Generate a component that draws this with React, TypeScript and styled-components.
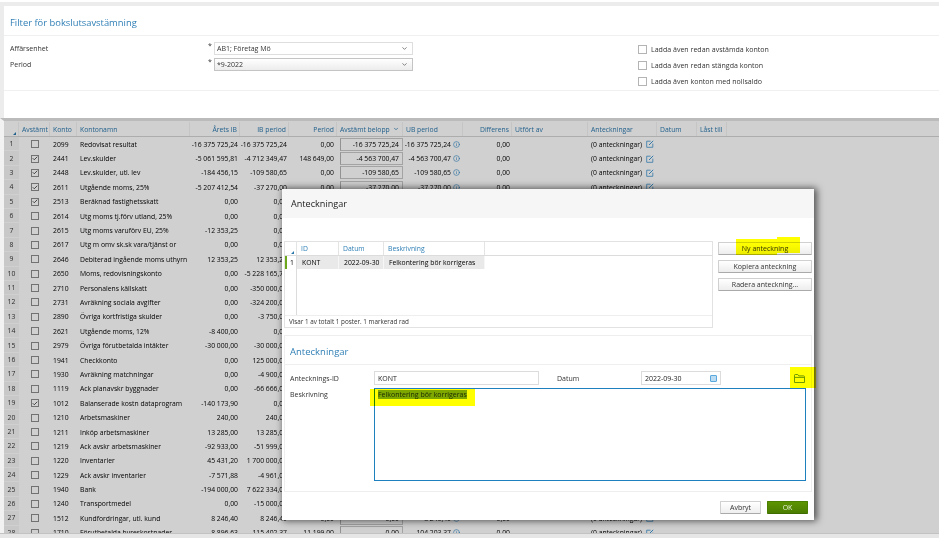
import React from 'react';
import styled, { createGlobalStyle } from 'styled-components';
import { Info, Check, ChevronDown } from 'lucide-react';

const GlobalStyle = createGlobalStyle`
  html, body {
    margin: 0;
    padding: 0;
    background: #fff;
    overflow: hidden;
  }
  body {
    font-family: 'Open Sans', 'Liberation Sans', sans-serif;
    font-size: 7px;
    color: #222;
  }
`;

const COLUMNS = '15px 31px 27px 113px 50px 49px 48px 66px 60px 49px 76px 69px 40px 30px 1fr';
const ROW_HEIGHT = 14.4;

const Page = styled.div`
  position: relative;
  width: 939px;
  height: 538px;
  overflow: hidden;
  display: flex;
  flex-direction: column;
  background: #fff;
  filter: blur(0.3px);
`;

const TopStrip = styled.div`
  height: 6px;
  flex: none;
  border-top: 2px solid #fff;
  box-sizing: border-box;
  background: #ececec;
`;

const FilterPanel = styled.section`
  height: 112px;
  flex: none;
  box-sizing: border-box;
  border-left: 4px solid #ececec;
  background: #fff;
`;

const FilterTitle = styled.h2`
  margin: 0;
  height: 30px;
  box-sizing: border-box;
  padding: 10px 0 0 6px;
  border-bottom: 1px solid #f0f0f0;
  font-size: 9.4px;
  line-height: 14px;
  font-weight: 400;
  color: #2f7fb5;
`;

const FilterBody = styled.div`
  height: 55px;
  box-sizing: border-box;
  padding: 6px 0 0 6px;
  border-bottom: 1px solid #f0f0f0;
  display: grid;
  grid-template-columns: 198px 6px 199px 225px 1fr;
  grid-auto-rows: 13px;
  row-gap: 3px;
  align-items: center;
`;

const FieldLabel = styled.span`
  font-size: 7px;
  color: #333;
`;

const Required = styled.span`
  align-self: start;
  font-size: 7px;
  line-height: 8px;
  color: #333;
`;

const SelectBox = styled.div<{ $raised?: boolean }>`
  height: 13px;
  box-sizing: border-box;
  padding: 0 4px 0 2px;
  display: flex;
  align-items: center;
  justify-content: space-between;
  font-size: 7px;
  color: #333;
  border: 1px solid ${(p) => (p.$raised ? '#c4c4c4' : '#dedede')};
  background: ${(p) => (p.$raised ? 'linear-gradient(#fff, #ececec)' : '#fff')};
`;

const CheckOption = styled.label`
  display: flex;
  align-items: center;
  gap: 4px;
  font-size: 7.05px;
  color: #333;
`;

const OptionList = styled.div`
  grid-column: 5;
  grid-row: 1 / span 3;
  align-self: start;
  margin-top: 2px;
  display: flex;
  flex-direction: column;
  gap: 6px;
`;

const OptionBox = styled.span`
  width: 9px;
  height: 9px;
  flex: none;
  box-sizing: border-box;
  border: 1px solid #b4b4b4;
  background: #fff;
`;

const GridArea = styled.div`
  position: relative;
  height: 415px;
  flex: none;
  box-sizing: border-box;
  border-top: 3px solid #bbb;
  border-left: 4px solid #f2f2f2;
  overflow: hidden;
  background: #fff;
`;

const Dim = styled.div`
  position: absolute;
  inset: 0;
  background: rgba(0, 0, 0, 0.185);
`;

const BottomStrip = styled.div`
  flex: 1;
  box-sizing: border-box;
  border-top: 1px solid #c2c2c2;
  background: #e6e6e6;
`;

const HeaderRow = styled.div`
  display: grid;
  grid-template-columns: ${COLUMNS};
  height: 15px;
  margin-top: 1px;
  box-sizing: border-box;
  border-bottom: 1px solid #d4d4d4;
  background: #fff;
`;

const HeaderCell = styled.div<{ $right?: boolean }>`
  position: relative;
  display: flex;
  align-items: center;
  justify-content: ${(p) => (p.$right ? 'flex-end' : 'flex-start')};
  gap: 3px;
  padding: 0 2px 0 3px;
  border-right: 1px solid #f2f2f2;
  font-size: 6.8px;
  color: #2c78ad;
  white-space: nowrap;
  overflow: hidden;
`;

const SortCorner = styled.span`
  position: absolute;
  right: 2px;
  bottom: 1px;
  width: 0;
  height: 0;
  border-left: 3px solid transparent;
  border-bottom: 3px solid #2c78ad;
`;

const DataRow = styled.div`
  display: grid;
  grid-template-columns: ${COLUMNS};
  height: ${ROW_HEIGHT}px;
  box-sizing: border-box;
`;

const RowNumber = styled.div`
  display: flex;
  align-items: center;
  justify-content: center;
  border-bottom: 1px solid #fff;
  background: #f6f6f6;
  font-size: 6.8px;
  color: #333;
`;

const Cell = styled.div<{ $right?: boolean; $pad?: number }>`
  display: flex;
  align-items: center;
  justify-content: ${(p) => (p.$right ? 'flex-end' : 'flex-start')};
  padding: ${(p) => (p.$right ? `0 ${p.$pad ?? 2}px 0 0` : `0 0 0 ${p.$pad ?? 3}px`)};
  font-size: 6.8px;
  color: #000;
  white-space: nowrap;
  overflow: hidden;
`;

const CheckCell = styled(Cell)`
  justify-content: center;
  padding: 0;
`;

const RowCheck = styled.span`
  width: 8px;
  height: 8px;
  box-sizing: border-box;
  display: flex;
  align-items: center;
  justify-content: center;
  border: 1px solid #8c8c8c;
  background: #fff;
`;

const AmountBox = styled.div`
  flex: 1;
  height: 13px;
  box-sizing: border-box;
  padding-right: 3px;
  display: flex;
  align-items: center;
  justify-content: flex-end;
  border: 1px solid #c8c8c8;
  border-left-color: #b4b4b4;
  background: #fff;
  font-size: 6.8px;
  color: #000;
`;

const UbValue = styled.span`
  display: inline-flex;
  align-items: center;
  gap: 2px;
`;

const NoteLink = styled.span`
  display: inline-flex;
  align-items: center;
  gap: 4px;
`;

const Modal = styled.div`
  position: absolute;
  left: 282px;
  top: 189px;
  width: 532px;
  height: 331px;
  display: flex;
  flex-direction: column;
  background: #fff;
  box-shadow: 2px 0 7px 1px rgba(0, 0, 0, 0.6);
`;

const ModalHeader = styled.div`
  height: 29px;
  flex: none;
  box-sizing: border-box;
  padding: 8px 0 0 9px;
  background: #f6f6f6;
  font-size: 9.1px;
  line-height: 14px;
  color: #222;
`;

const ModalTop = styled.div`
  display: flex;
  gap: 5px;
  padding: 23px 2px 0 2px;
  height: 87px;
  flex: none;
`;

const NotesGrid = styled.div`
  width: 429px;
  height: 87px;
  flex: none;
  box-sizing: border-box;
  display: flex;
  flex-direction: column;
  border: 1px solid #e2e2e2;
`;

const NotesHead = styled.div`
  display: grid;
  grid-template-columns: 12px 42px 45px 101px 1fr;
  height: 14px;
  flex: none;
  box-sizing: border-box;
  border-bottom: 1px solid #dcdcdc;
`;

const NotesHeadCell = styled.div`
  position: relative;
  display: flex;
  align-items: center;
  padding-left: 4px;
  border-right: 1px solid #e4e4e4;
  font-size: 6.8px;
  color: #2f7fb5;
  &:last-child {
    border-right: none;
  }
`;

const NotesBody = styled.div`
  flex: 1;
  display: grid;
  grid-template-columns: 12px 42px 45px 101px;
  grid-auto-rows: 13px;
  background: linear-gradient(90deg, #fff 11px, #dcdcdc 11px, #dcdcdc 12px, #fff 12px);
`;

const NotesCell = styled.div<{ $first?: boolean }>`
  display: flex;
  align-items: center;
  padding-left: 5px;
  background: #e9e9e9;
  border-right: 1px solid #f6f6f6;
  font-size: 6.8px;
  color: #000;
  white-space: nowrap;
  overflow: hidden;
  ${(p) =>
    p.$first &&
    `
    padding-left: 3px;
    background: #fff;
    border-left: 2px solid #6ca61c;
    border-right: 1px solid #dcdcdc;
  `}
`;

const NotesFooter = styled.div`
  height: 12px;
  flex: none;
  box-sizing: border-box;
  padding: 0 0 0 4px;
  display: flex;
  align-items: center;
  border-top: 1px solid #eee;
  font-size: 6.3px;
  color: #333;
`;

const ButtonColumn = styled.div`
  flex: 1;
  display: flex;
  flex-direction: column;
  gap: 5px;
  padding: 1px 0 0;
`;

const SideButton = styled.button`
  height: 13px;
  padding: 0;
  box-sizing: border-box;
  border: 1px solid #d0d0d0;
  border-bottom-color: #aaa;
  border-radius: 1px;
  background: linear-gradient(#fff, #ededed);
  font-family: inherit;
  font-size: 7px;
  color: #333;
`;

const DetailPanel = styled.section`
  margin: 7px 2px 0;
  height: 157px;
  flex: none;
  box-sizing: border-box;
  border: 1px solid #eee;
`;

const DetailTitle = styled.h3`
  margin: 0;
  height: 29px;
  box-sizing: border-box;
  padding: 9px 0 0 5px;
  border-bottom: 1px solid #efefef;
  font-size: 9.5px;
  line-height: 14px;
  font-weight: 400;
  color: #2f7fb5;
`;

const DetailForm = styled.div`
  display: grid;
  grid-template-columns: 84px 165px 102px 80px 1fr;
  grid-template-rows: 14px 93px;
  row-gap: 3px;
  padding: 6px 5px 0 5px;
`;

const FormLabel = styled.span<{ $indent?: boolean; $top?: boolean }>`
  display: flex;
  align-items: ${(p) => (p.$top ? 'flex-start' : 'center')};
  padding-left: ${(p) => (p.$indent ? '18px' : '0')};
  padding-top: ${(p) => (p.$top ? '2px' : '0')};
  font-size: 7px;
  color: #333;
`;

const TextField = styled.div`
  box-sizing: border-box;
  padding: 0 3px;
  display: flex;
  align-items: center;
  justify-content: space-between;
  border: 1px solid #dcdcdc;
  font-size: 7px;
  color: #222;
`;

const CalendarIcon = styled.span`
  width: 7px;
  height: 7px;
  box-sizing: border-box;
  border: 1px solid #5aa8de;
  border-radius: 1px;
  background: #bcdcf2;
`;

const FolderSlot = styled.div`
  display: flex;
  align-items: center;
  justify-content: flex-end;
  padding-right: 1px;
`;

const NoteArea = styled.div`
  grid-column: 2 / span 4;
  box-sizing: border-box;
  padding: 1px 3px;
  border: 1.5px solid #1f80c0;
  font-size: 7px;
  line-height: 10px;
  color: #1d2a00;
`;

const Selected = styled.span`
  background: #7ea800;
`;

const ModalFooter = styled.div`
  flex: 1;
  display: flex;
  justify-content: flex-end;
  align-items: flex-start;
  gap: 6px;
  padding: 9px 6px 0 0;
`;

const FooterButton = styled.button<{ $primary?: boolean }>`
  width: 41px;
  height: 13px;
  padding: 0;
  box-sizing: border-box;
  border-radius: 1px;
  border: 1px solid ${(p) => (p.$primary ? '#4a7f00' : '#d0d0d0')};
  border-bottom-color: ${(p) => (p.$primary ? '#3f6c00' : '#aaa')};
  background: ${(p) => (p.$primary ? 'linear-gradient(#5c9400, #4b7d00)' : 'linear-gradient(#fff, #efefef)')};
  font-family: inherit;
  font-size: 7px;
  color: ${(p) => (p.$primary ? '#e8f2d8' : '#333')};
`;

const Marker = styled.div<{ $x: number; $y: number; $w: number; $h: number }>`
  position: absolute;
  left: ${(p) => p.$x}px;
  top: ${(p) => p.$y}px;
  width: ${(p) => p.$w}px;
  height: ${(p) => p.$h}px;
  background: #ffff00;
  mix-blend-mode: multiply;
`;

type Row = {
  konto: string;
  namn: string;
  arets: string;
  ib: string;
  period?: string;
  belopp?: string;
  ub?: string;
  checked?: boolean;
};

const ROWS: Row[] = [
  { konto: '2099', namn: 'Redovisat resultat', arets: '-16 375 725,24', ib: '-16 375 725,24', belopp: '-16 375 725,24', ub: '-16 375 725,24' },
  { konto: '2441', namn: 'Lev.skulder', arets: '-5 061 595,81', ib: '-4 712 349,47', period: '148 649,00', belopp: '-4 563 700,47', ub: '-4 563 700,47', checked: true },
  { konto: '2448', namn: 'Lev.skulder, utl. lev', arets: '-184 456,15', ib: '-109 580,65', belopp: '-109 580,65', ub: '-109 580,65', checked: true },
  { konto: '2611', namn: 'Utgående moms, 25%', arets: '-5 207 412,54', ib: '-37 270,00', belopp: '-37 270,00', ub: '-37 270,00', checked: true },
  { konto: '2513', namn: 'Beräknad fastighetsskatt', arets: '0,00', ib: '0,00', checked: true },
  { konto: '2614', namn: 'Utg moms tj.förv utland, 25%', arets: '0,00', ib: '0,00' },
  { konto: '2615', namn: 'Utg moms varuförv EU, 25%', arets: '-12 353,25', ib: '0,00' },
  { konto: '2617', namn: 'Utg m omv sk.sk vara/tjänst or', arets: '0,00', ib: '0,00' },
  { konto: '2646', namn: 'Debiterad ingående moms uthyrn', arets: '12 353,25', ib: '12 353,25' },
  { konto: '2650', namn: 'Moms, redovisningskonto', arets: '0,00', ib: '-5 228 165,75' },
  { konto: '2710', namn: 'Personalens källskatt', arets: '0,00', ib: '-350 000,00' },
  { konto: '2731', namn: 'Avräkning sociala avgifter', arets: '0,00', ib: '-324 200,00' },
  { konto: '2890', namn: 'Övriga kortfristiga skulder', arets: '0,00', ib: '-3 750,00' },
  { konto: '2621', namn: 'Utgående moms, 12%', arets: '-8 400,00', ib: '0,00' },
  { konto: '2979', namn: 'Övriga förutbetalda intäkter', arets: '-30 000,00', ib: '-30 000,00' },
  { konto: '1941', namn: 'Checkkonto', arets: '0,00', ib: '125 000,00' },
  { konto: '1930', namn: 'Avräkning matchningar', arets: '0,00', ib: '-4 900,00' },
  { konto: '1119', namn: 'Ack planavskr byggnader', arets: '0,00', ib: '-66 666,00' },
  { konto: '1012', namn: 'Balanserade kostn dataprogram', arets: '-140 173,90', ib: '0,00', checked: true },
  { konto: '1210', namn: 'Arbetsmaskiner', arets: '240,00', ib: '240,00' },
  { konto: '1211', namn: 'Inköp arbetsmaskiner', arets: '13 285,00', ib: '13 285,00' },
  { konto: '1219', namn: 'Ack avskr arbetsmaskiner', arets: '-92 933,00', ib: '-51 999,00' },
  { konto: '1220', namn: 'Inventarier', arets: '45 431,20', ib: '1 700 000,00' },
  { konto: '1229', namn: 'Ack avskr inventarier', arets: '-7 571,88', ib: '-4 961,00' },
  { konto: '1940', namn: 'Bank', arets: '-194 000,00', ib: '7 622 334,00' },
  { konto: '1240', namn: 'Transportmedel', arets: '0,00', ib: '-15 000,00' },
  { konto: '1512', namn: 'Kundfordringar, utl. kund', arets: '8 246,40', ib: '8 246,40' },
  { konto: '1710', namn: 'Förutbetalda hyreskostnader', arets: '8 896,63', ib: '115 402,37', period: '-11 199,00', ub: '104 203,37' },
];

const FolderIcon = () => (
  <svg width="11" height="9" viewBox="0 0 11 9" fill="none" stroke="#6f9a00" strokeWidth="1">
    <path d="M.5 8.5V1.2c0-.4.3-.7.7-.7h2.6l1 1.4h4.9c.4 0 .8.3.8.7v5.9z" />
    <path d="M.5 3.4h10" />
  </svg>
);

const EditIcon = () => (
  <svg width="8" height="8" viewBox="0 0 8 8" fill="none" stroke="#3f94d0">
    <path d="M4.6 1.2H.7v6.1h6.1V3.6" strokeWidth="0.8" />
    <path d="M3 5 7.2.8" strokeWidth="1" />
  </svg>
);

const GridRow = ({ row, index }: { row: Row; index: number }) => {
  const ub = row.ub ?? row.ib;
  return (
    <DataRow>
      <RowNumber>{index + 1}</RowNumber>
      <CheckCell>
        <RowCheck>{row.checked && <Check size={7} strokeWidth={3} color="#222" />}</RowCheck>
      </CheckCell>
      <Cell>{row.konto}</Cell>
      <Cell>{row.namn}</Cell>
      <Cell $right>{row.arets}</Cell>
      <Cell $right>{row.ib}</Cell>
      <Cell $right $pad={3}>{row.period ?? '0,00'}</Cell>
      <Cell>
        <AmountBox>{row.belopp ?? '0,00'}</AmountBox>
      </Cell>
      <Cell $right $pad={3}>
        <UbValue>
          {ub}
          <Info size={7} color="#2c84c4" strokeWidth={2} />
        </UbValue>
      </Cell>
      <Cell $right>0,00</Cell>
      <Cell />
      <Cell>
        <NoteLink>
          (0 anteckningar)
          <EditIcon />
        </NoteLink>
      </Cell>
      <Cell />
      <Cell />
      <Cell />
    </DataRow>
  );
};

export default function App() {
  return (
    <Page>
      <GlobalStyle />
      <TopStrip />
      <FilterPanel>
        <FilterTitle>Filter för bokslutsavstämning</FilterTitle>
        <FilterBody>
          <FieldLabel>Affärsenhet</FieldLabel>
          <Required>*</Required>
          <SelectBox>
            AB1; Företag Mö
            <ChevronDown size={7} color="#555" strokeWidth={2.5} />
          </SelectBox>
          <span />
          <OptionList>
            <CheckOption><OptionBox />Ladda även redan avstämda konton</CheckOption>
            <CheckOption><OptionBox />Ladda även redan stängda konton</CheckOption>
            <CheckOption><OptionBox />Ladda även konton med nollsaldo</CheckOption>
          </OptionList>
          <FieldLabel>Period</FieldLabel>
          <Required>*</Required>
          <SelectBox $raised>
            *9-2022
            <ChevronDown size={7} color="#555" strokeWidth={2.5} />
          </SelectBox>
        </FilterBody>
      </FilterPanel>

      <GridArea>
        <HeaderRow>
          <HeaderCell><SortCorner /></HeaderCell>
          <HeaderCell>Avstämt</HeaderCell>
          <HeaderCell>Konto</HeaderCell>
          <HeaderCell>Kontonamn</HeaderCell>
          <HeaderCell $right>Årets IB</HeaderCell>
          <HeaderCell $right>IB period</HeaderCell>
          <HeaderCell $right>Period</HeaderCell>
          <HeaderCell>
            Avstämt belopp
            <ChevronDown size={6} color="#2c78ad" strokeWidth={3} />
          </HeaderCell>
          <HeaderCell>UB period</HeaderCell>
          <HeaderCell $right>Differens</HeaderCell>
          <HeaderCell>Utfört av</HeaderCell>
          <HeaderCell>Anteckningar</HeaderCell>
          <HeaderCell>Datum</HeaderCell>
          <HeaderCell>Låst till</HeaderCell>
          <span />
        </HeaderRow>
        {ROWS.map((row, i) => (
          <GridRow key={row.konto} row={row} index={i} />
        ))}
        <Dim />
      </GridArea>
      <BottomStrip />

      <Modal>
        <ModalHeader>Anteckningar</ModalHeader>
        <ModalTop>
          <NotesGrid>
            <NotesHead>
              <NotesHeadCell><SortCorner /></NotesHeadCell>
              <NotesHeadCell>ID</NotesHeadCell>
              <NotesHeadCell>Datum</NotesHeadCell>
              <NotesHeadCell>Beskrivning</NotesHeadCell>
              <NotesHeadCell />
            </NotesHead>
            <NotesBody>
              <NotesCell $first>1</NotesCell>
              <NotesCell>KONT</NotesCell>
              <NotesCell>2022-09-30</NotesCell>
              <NotesCell>Felkontering bör korrigeras</NotesCell>
            </NotesBody>
            <NotesFooter>Visar 1 av totalt 1 poster. 1 markerad rad</NotesFooter>
          </NotesGrid>
          <ButtonColumn>
            <SideButton>Ny anteckning</SideButton>
            <SideButton>Kopiera anteckning</SideButton>
            <SideButton>Radera anteckning...</SideButton>
          </ButtonColumn>
        </ModalTop>
        <DetailPanel>
          <DetailTitle>Anteckningar</DetailTitle>
          <DetailForm>
            <FormLabel>Antecknings-ID</FormLabel>
            <TextField>KONT</TextField>
            <FormLabel $indent>Datum</FormLabel>
            <TextField>
              2022-09-30
              <CalendarIcon />
            </TextField>
            <FolderSlot><FolderIcon /></FolderSlot>
            <FormLabel $top>Beskrivning</FormLabel>
            <NoteArea><Selected>Felkontering bör korrigeras</Selected></NoteArea>
          </DetailForm>
        </DetailPanel>
        <ModalFooter>
          <FooterButton>Avbryt</FooterButton>
          <FooterButton $primary>OK</FooterButton>
        </ModalFooter>
        <Marker $x={454} $y={50} $w={41} $h={16} />
        <Marker $x={495} $y={48} $w={23} $h={16} />
        <Marker $x={88} $y={200} $w={105} $h={17} />
        <Marker $x={508} $y={178} $w={26} $h={21} />
      </Modal>
    </Page>
  );
}
